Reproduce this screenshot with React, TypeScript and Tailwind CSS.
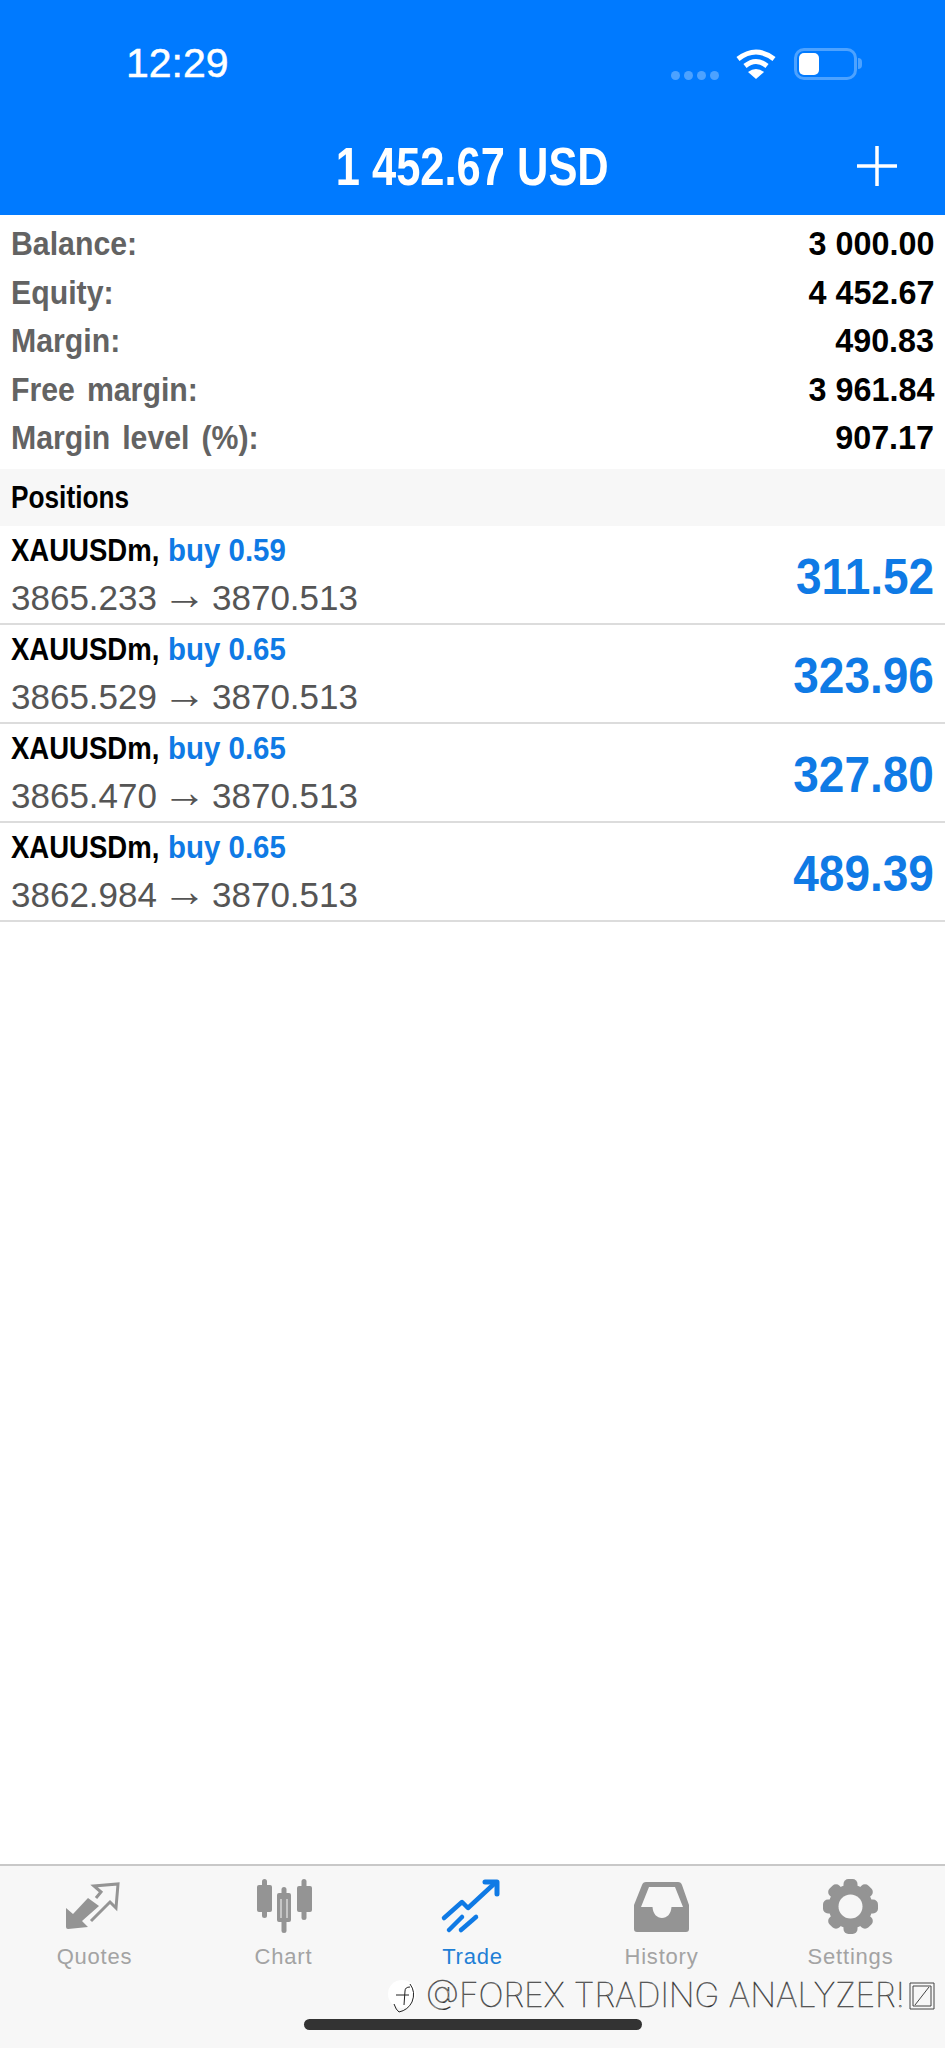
const summary = [
  { label: "Balance:", value: "3 000.00" },
  { label: "Equity:", value: "4 452.67" },
  { label: "Margin:", value: "490.83" },
  { label: "Free margin:", value: "3 961.84" },
  { label: "Margin level (%):", value: "907.17" },
];

const positions = [
  { lots: "buy 0.59", from: "3865.233", to: "3870.513", profit: "311.52" },
  { lots: "buy 0.65", from: "3865.529", to: "3870.513", profit: "323.96" },
  { lots: "buy 0.65", from: "3865.470", to: "3870.513", profit: "327.80" },
  { lots: "buy 0.65", from: "3862.984", to: "3870.513", profit: "489.39" },
];

function QuotesIcon() {
  return (
    <svg viewBox="0 0 80 70" className="h-[70px] w-[80px]">
      <path d="M11 38 L18 44 L33 28 L44 36 L27 51 L33 57 L13 59 Q11 59 11 57 Z" fill="#949494" />
      <path d="M41 28 L46 22 L39 16 L63 14 L61 38 L55 32 L36 51" fill="none" stroke="#949494" strokeWidth="3" />
    </svg>
  );
}

function ChartIcon() {
  return (
    <svg viewBox="0 0 80 70" className="h-[70px] w-[80px]" fill="#949494">
      <rect x="18" y="9" width="5" height="39" rx="2.5" />
      <rect x="13" y="15" width="15" height="27" rx="2" />
      <rect x="37.5" y="17" width="5" height="46" rx="2.5" />
      <path fillRule="evenodd" d="M35 23 H45 Q47 23 47 25 V50 Q47 52 45 52 H35 Q33 52 33 50 V25 Q33 23 35 23 Z M36.5 29 V48 H43.5 V29 Z" />
      <rect x="57.5" y="9" width="5" height="41" rx="2.5" />
      <rect x="53" y="16" width="15" height="26" rx="2" />
    </svg>
  );
}

function TradeIcon() {
  return (
    <svg viewBox="3 0 80 70" className="h-[70px] w-[80px] translate-x-[3px]" fill="none" stroke="#0f7ae5" strokeWidth="4.5" strokeLinecap="round" strokeLinejoin="round">
      <path d="M11 48 L29 32 L35 38 L62 13" />
      <path d="M52 12 H64 V24" strokeWidth="5" />
      <path d="M16 60 L29 47" />
      <path d="M28 60 L43 47" />
    </svg>
  );
}

function HistoryIcon() {
  return (
    <svg viewBox="0 0 80 70" className="h-[70px] w-[80px]" fill="#949494">
      <path
        fillRule="evenodd"
        d="M24 12 H56 Q59 12 60 15 L67 35 V59 Q67 62 64 62 H15 Q12 62 12 59 V35 L20 15 Q21 12 24 12 Z M27 17 L19 37 H30.5 C31 44 35 48 40 48 C45 48 49 44 49.5 37 H61 L53 17 Z"
      />
    </svg>
  );
}

function SettingsIcon() {
  return (
    <svg viewBox="0 0 80 70" className="h-[70px] w-[80px]" fill="#949494">
      {[0, 45, 90, 135, 180, 225, 270, 315].map((deg) => (
        <rect key={deg} x="32.5" y="9" width="14" height="14" rx="5" transform={`rotate(${deg} 39.5 36.5)`} />
      ))}
      <circle cx="39.5" cy="36.5" r="22" />
      <circle cx="39.5" cy="36.5" r="12" fill="#f7f7f7" />
    </svg>
  );
}

const tabs = [
  { label: "Quotes", icon: <QuotesIcon />, active: false },
  { label: "Chart", icon: <ChartIcon />, active: false },
  { label: "Trade", icon: <TradeIcon />, active: true },
  { label: "History", icon: <HistoryIcon />, active: false },
  { label: "Settings", icon: <SettingsIcon />, active: false },
];

export default function App() {
  return (
    <div className="relative flex h-[2048px] w-[945px] flex-col overflow-hidden bg-white font-['Liberation_Sans',Arial,sans-serif]">
      <header className="h-[215px] shrink-0 bg-[#007aff] text-white">
        <div className="flex h-[127px] items-center justify-between pr-[83px] pl-[126px]">
          <span className="text-[41px] leading-none font-normal [-webkit-text-stroke:0.5px_white]">12:29</span>
          <div className="flex h-[32px] items-center">
            <div className="mr-[16px] flex gap-[4px] self-end">
              <i className="h-[9px] w-[9px] rounded-full bg-white/30" />
              <i className="h-[9px] w-[9px] rounded-full bg-white/30" />
              <i className="h-[9px] w-[9px] rounded-full bg-white/30" />
              <i className="h-[9px] w-[9px] rounded-full bg-white/30" />
            </div>
            <svg viewBox="0 0 42 31" className="mr-[17px] h-[31px] w-[42px]" fill="none" stroke="white" strokeWidth="5">
              <path d="M3 11 Q21 -3 39 11" />
              <path d="M10 18 Q21 9 32 18" />
              <path d="M13 24 L21 31 L29 24 Q21 18 13 24 Z" fill="white" stroke="none" />
            </svg>
            <div className="flex items-center">
              <div className="h-[32px] w-[63px] rounded-[10px] border-[3px] border-white/30 p-[2px]">
                <div className="h-full w-[20px] rounded-[5px] bg-white" />
              </div>
              <div className="ml-[1px] h-[11px] w-[4px] rounded-r-full bg-white/30" />
            </div>
          </div>
        </div>
        <div className="grid h-[78px] grid-cols-[1fr_auto_1fr] items-center pr-[48px]">
          <div />
          <span className="inline-block origin-center scale-x-[0.82] pl-[58px] text-[53px] leading-none font-bold whitespace-nowrap">
            1 452.67 USD
          </span>
          <svg viewBox="0 0 40 40" className="h-[40px] w-[40px] justify-self-end" stroke="white" strokeWidth="3.5">
            <path d="M20 0 V40 M0 20 H40" />
          </svg>
        </div>
      </header>

      <section className="shrink-0 px-[11px] pt-[4px] pb-[7px]">
        {summary.map((row) => (
          <div key={row.label} className="flex h-[48.5px] items-center justify-between text-[34px] leading-none font-bold">
            <span className="inline-block origin-left scale-x-[0.89] whitespace-nowrap text-[#636363] [word-spacing:4px]">{row.label}</span>
            <span className="inline-block origin-right scale-x-[0.95] whitespace-nowrap text-black">{row.value}</span>
          </div>
        ))}
      </section>

      <div className="flex h-[57px] shrink-0 items-center bg-[#f7f7f7] px-[11px]">
        <span className="inline-block origin-left scale-x-[0.82] text-[32px] leading-none font-bold text-black">Positions</span>
      </div>

      <section className="shrink-0">
        {positions.map((p) => (
          <div key={p.from} className="flex h-[99px] items-center justify-between border-b-2 border-[#dcdcdc] px-[11px]">
            <div className="flex flex-col gap-[6px] pt-[2px]">
              <div className="flex text-[32px] leading-[40px] font-bold whitespace-nowrap text-black">
                <span className="inline-block w-[157px] origin-left scale-x-[0.86]">XAUUSDm,</span>
                <span className="inline-block origin-left scale-x-[0.92] text-[#0f7ae5]">{p.lots}</span>
              </div>
              <div className="flex items-center text-[35px] leading-[40px] whitespace-nowrap text-[#555555]">
                <span>{p.from}</span>
                <span className="inline-block w-[55px] -translate-y-[4px] text-center text-[44px] leading-none">→</span>
                <span>{p.to}</span>
              </div>
            </div>
            <span className="inline-block origin-right scale-x-[0.92] pt-[6px] text-[50px] leading-none font-bold text-[#0f7ae5]">
              {p.profit}
            </span>
          </div>
        ))}
      </section>

      <nav className="mt-auto flex h-[184px] shrink-0 flex-col border-t-2 border-[#c8c8c8] bg-[#f7f7f7] pt-[4px]">
        <div className="grid grid-cols-5">
          {tabs.map((tab) => (
            <div key={tab.label} className="flex flex-col items-center">
              {tab.icon}
              <span
                className={`mt-[4px] text-[22px] leading-[26px] font-medium tracking-[0.8px] ${
                  tab.active ? "text-[#1f7fd6]" : "text-[#a3a3a3]"
                }`}
              >
                {tab.label}
              </span>
            </div>
          ))}
        </div>
        <div className="mx-auto mt-[49px] h-[11px] w-[338px] rounded-full bg-[#333333]" />
      </nav>

      {/* watermark sits over the tab bar */}
      <div className="absolute top-[1978px] left-[388px] flex items-center">
        <svg viewBox="0 0 30 36" className="h-[36px] w-[30px]">
          <circle cx="14" cy="16" r="14" fill="white" />
          <path d="M6 26 Q8 32 11 34 Q20 32 24 24 Q28 14 22 6 M16 27 L17 13 Q17 9 22 9 M8 17 H21" fill="none" stroke="#222222" strokeWidth="1" />
        </svg>
        <span className="ml-[8px] font-['Inter',sans-serif] text-[33.5px] leading-none font-thin whitespace-nowrap text-white [-webkit-text-stroke:0.6px_#333333]">
          @FOREX TRADING ANALYZER!
        </span>
        <svg viewBox="0 0 26 28" className="ml-[4px] h-[28px] w-[26px]" fill="none" stroke="#444444" strokeWidth="1">
          <path d="M1 1 H25 V27 H1 Z M4 4 H22 V24 H4 Z M20 5 L6 23" />
        </svg>
      </div>
    </div>
  );
}
